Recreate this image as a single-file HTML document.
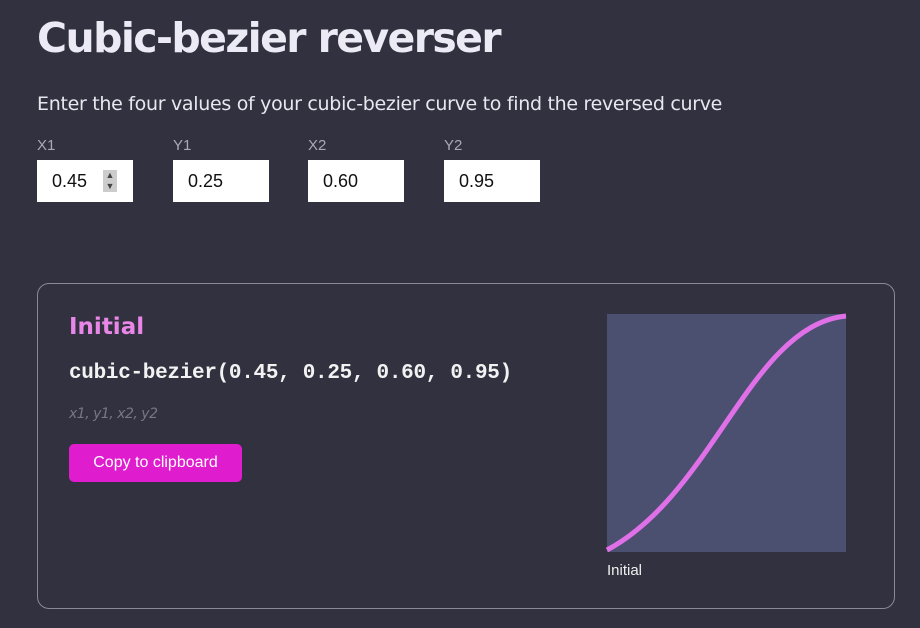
<!DOCTYPE html>
<html><head><meta charset="utf-8"><style>
body{margin:0;width:920px;height:628px;background:#32313f;font-family:"Liberation Sans",sans-serif;color:#fff;position:relative;overflow:hidden}
.a{position:absolute}
h1{position:absolute;left:37px;top:14px;margin:0;font-size:41px;font-weight:bold;color:#eceaf4;font-family:"DejaVu Sans","Liberation Sans",sans-serif;letter-spacing:-1.6px}
.lbl{font-size:15px;color:#aaa9b4;top:137px}
.inp{top:160px;width:96px;height:42px;background:#fff;color:#111;font-size:18px;line-height:42px;box-sizing:border-box;padding-left:15px}
</style></head><body>
<h1>Cubic-bezier reverser</h1>
<div class="a" style="left:37px;top:93px;font-size:19px;color:#e8e7ef;font-family:'DejaVu Sans',sans-serif;letter-spacing:-0.3px">Enter the four values of your cubic-bezier curve to find the reversed curve</div>
<div class="a lbl" style="left:37px">X1</div><div class="a lbl" style="left:173px">Y1</div><div class="a lbl" style="left:308px">X2</div><div class="a lbl" style="left:444px">Y2</div>
<div class="a inp" style="left:37px">0.45<span style="position:absolute;left:66px;top:10px;width:14px;height:22px;background:#ccc;font-size:9px;line-height:11px;text-align:center;color:#444">▲<br>▼</span></div>
<div class="a inp" style="left:173px">0.25</div>
<div class="a inp" style="left:308px">0.60</div>
<div class="a inp" style="left:444px">0.95</div>
<div class="a" style="left:37px;top:283px;width:858px;height:326px;border:1.5px solid #8a8997;border-radius:12px;box-sizing:border-box"></div>
<div class="a" style="left:69px;top:314px;font-size:23px;font-weight:bold;color:#e987e8;font-family:'DejaVu Sans',sans-serif">Initial</div>
<div class="a" style="left:69px;top:362px;font-size:21px;font-family:'Liberation Mono',monospace;color:#f2f2f2;font-weight:bold;letter-spacing:-0.3px">cubic-bezier(0.45, 0.25, 0.60, 0.95)</div>
<div class="a" style="left:69px;top:406px;font-size:14px;font-style:italic;color:#777686;font-family:'DejaVu Sans',sans-serif;letter-spacing:-0.5px">x1, y1, x2, y2</div>
<div class="a" style="left:69px;top:444px;width:173px;height:38px;background:#e01ccf;border-radius:5px;text-align:center;line-height:38px;font-size:16px;color:#fff">Copy to clipboard</div>
<svg class="a" style="left:0;top:0" width="920" height="628">
<rect x="607" y="314" width="239" height="238" fill="#4b5070"/>
<path d="M607 550 C714.5 492.5 750.4 325.9 846 316" stroke="#e070e8" stroke-width="5" fill="none"/>
</svg>
<div class="a" style="left:607px;top:562px;font-size:15px;color:#f0f0f0">Initial</div>
</body></html>
